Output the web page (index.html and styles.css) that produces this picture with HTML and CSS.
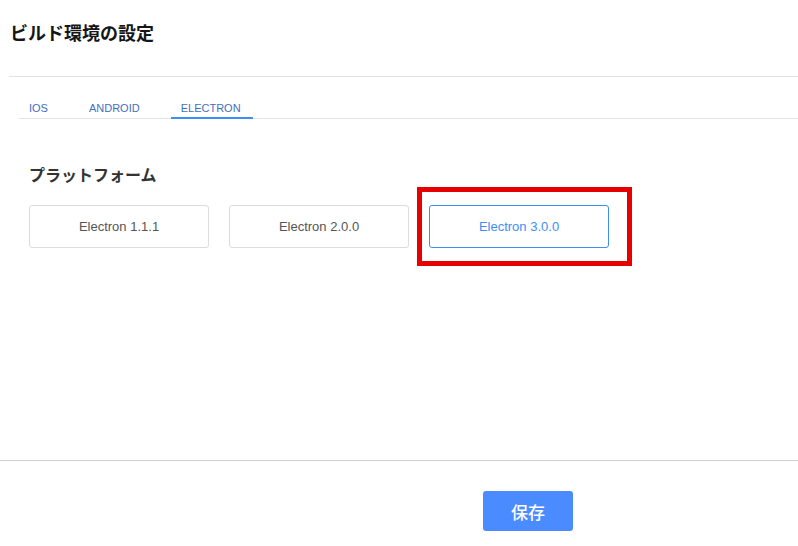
FILE: index.html
```html
<!DOCTYPE html>
<html lang="ja">

<head>
  <meta charset="UTF-8">
  <title>ビルド環境の設定</title>
  <link rel="stylesheet" href="styles.css">
</head>

<body>
  <div class="dialog">
    <header class="dialog-header">
      <h1>ビルド環境の設定</h1>
    </header>

    <main class="dialog-body">
      <nav class="tabs">
        <a class="tab">IOS</a>
        <a class="tab">ANDROID</a>
        <a class="tab active">ELECTRON</a>
      </nav>

      <section class="platform">
        <h2>プラットフォーム</h2>
        <div class="options">
          <button class="option">Electron 1.1.1</button>
          <button class="option">Electron 2.0.0</button>
          <button class="option selected">Electron 3.0.0
            <span class="highlight"></span>
          </button>
        </div>
      </section>
    </main>

    <footer class="dialog-footer">
      <button class="save-button">保存</button>
    </footer>
  </div>
</body>

</html>
```

FILE: styles.css
```css
:root {
  --accent: #3d8ef5;
  --tab-text: #4171c0;
  --line: #e3e3e3;
  --border: #dcdcdc;
}

* {
  box-sizing: border-box;
  margin: 0;
  padding: 0;
}

body {
  background: #fff;
  font-family: "Liberation Sans", "Noto Sans CJK JP", Arial, sans-serif;
  color: #333;
}

.dialog {
  display: flex;
  flex-direction: column;
  height: 546px;
}

.dialog-header {
  margin-left: 9px;
  padding: 21px 0 0 1px;
  height: 77px;
  border-bottom: 1px solid var(--line);
}

.dialog-header h1 {
  font-size: 18px;
  line-height: 26px;
  font-weight: 700;
  color: #161616;
}

.dialog-body {
  flex: 1;
  padding-left: 19px;
}

.tabs {
  display: flex;
  gap: 21px;
  margin-top: 23px;
  border-bottom: 1px solid var(--line);
}

.tab {
  padding: 1px 10px 2px;
  font-size: 11px;
  line-height: 14px;
  color: var(--tab-text);
  border-bottom: 2px solid transparent;
  margin-bottom: -1px;
  cursor: pointer;
}

.tab.active {
  border-bottom-color: var(--accent);
  padding-right: 12px;
}

.platform {
  padding-left: 10px;
  margin-top: 46px;
}

.platform h2 {
  font-size: 16px;
  line-height: 22px;
  font-weight: 700;
  color: #333;
}

.options {
  display: flex;
  gap: 20px;
  margin-top: 18px;
}

.option {
  position: relative;
  width: 180px;
  height: 43px;
  background: #fff;
  border: 1px solid var(--border);
  border-radius: 3px;
  font-family: "Liberation Sans", Arial, sans-serif;
  font-size: 13px;
  color: #555;
  cursor: pointer;
}

.option.selected {
  border-color: var(--accent);
  color: var(--accent);
}

/* annotation box drawn over the selected option */
.highlight {
  position: absolute;
  left: -13px;
  top: -19px;
  right: -24px;
  bottom: -19px;
  border: 5px solid #e60000;
  pointer-events: none;
}

.dialog-footer {
  height: 86px;
  border-top: 1px solid #d0d0d0;
  padding: 30px 0 0 483px;
}

.save-button {
  width: 90px;
  height: 40px;
  border: none;
  border-radius: 3px;
  background: #4a8cff;
  color: #fff;
  font-family: "Noto Sans CJK JP", sans-serif;
  font-size: 17px;
  font-weight: 500;
  cursor: pointer;
}
```
